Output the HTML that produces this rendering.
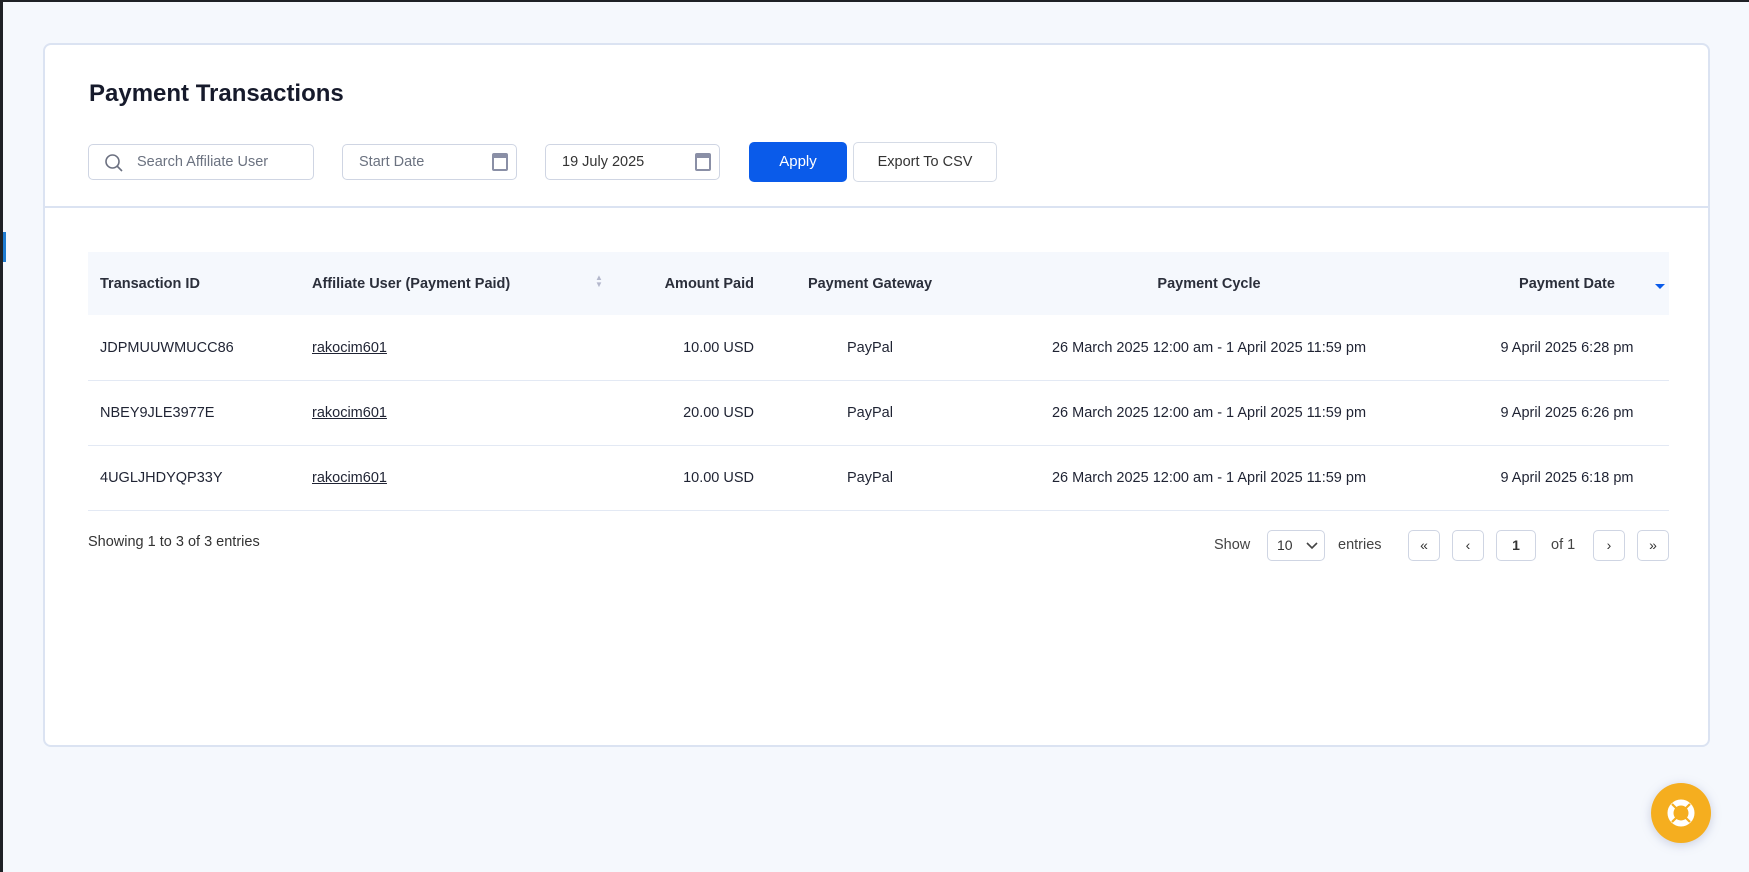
<!DOCTYPE html>
<html><head><meta charset="utf-8"><style>
*{box-sizing:border-box;margin:0;padding:0}
body{width:1749px;height:872px;background:#f5f8fd;font-family:"Liberation Sans",sans-serif;color:#1f2333;position:relative;overflow:hidden;border-top:2px solid #1e2126;border-left:3px solid #1e2126}
.a{position:absolute}
.card{left:40px;top:41px;width:1667px;height:704px;background:#fff;border:2px solid #dbe3f2;border-radius:8px}
.inp{border:1px solid #cfd5e3;border-radius:5px;height:36px;font-size:14.5px;color:#6b7280;line-height:34px}
.th{font-size:14.5px;font-weight:bold;color:#2b2f3b;top:274px}
.td{font-size:14.5px;color:#1f2333}
.ln{height:1px;background:#e3e9f4;left:85px;width:1581px}
.pb{border:1px solid #cfd5e3;border-radius:5px;height:31px;top:528px;text-align:center;line-height:29px;font-size:14px;color:#333}
.cal{width:16px;height:18px;border:2px solid #8a8fa6;border-top-width:5px;border-radius:2px}
</style></head><body>
<div class="a" style="left:0;top:230px;width:3px;height:30px;background:#1e7bd1"></div>
<div class="a card"></div>
<div class="a" style="left:86px;top:78px;font-size:24px;font-weight:bold;color:#161a2b">Payment Transactions</div>
<div class="a inp" style="left:85px;top:142px;width:226px;padding-left:48px">Search Affiliate User</div>
<svg class="a" style="left:101px;top:151px" width="20" height="20" viewBox="0 0 20 20"><circle cx="8.5" cy="8.5" r="6.5" fill="none" stroke="#6b7080" stroke-width="1.6"/><path d="M13 13l5 5" stroke="#6b7080" stroke-width="1.6"/></svg>
<div class="a inp" style="left:339px;top:142px;width:175px;padding-left:16px">Start Date</div>
<div class="a cal" style="left:489px;top:151px"></div>
<div class="a inp" style="left:542px;top:142px;width:175px;padding-left:16px;color:#333">19 July 2025</div>
<div class="a cal" style="left:692px;top:151px"></div>
<div class="a" style="left:746px;top:140px;width:98px;height:40px;background:#0a5bea;border-radius:5px;color:#fff;font-size:15px;text-align:center;line-height:40px">Apply</div>
<div class="a" style="left:850px;top:140px;width:144px;height:40px;border:1px solid #d5dbe6;border-radius:5px;color:#333;font-size:14.5px;text-align:center;line-height:38px">Export To CSV</div>
<div class="a" style="left:42px;top:204px;width:1663px;height:2px;background:#dbe3f2"></div>
<div class="a" style="left:85px;top:250px;width:1581px;height:63px;background:#f5f8fd"></div>
<div class="a th" style="left:97px">Transaction ID</div>
<div class="a th" style="left:309px">Affiliate User (Payment Paid)</div>
<div class="a" style="left:592px;top:272px;font-size:8px;color:#b4b8cc;line-height:7px">▲<br>▼</div>
<div class="a th" style="left:600px;width:151px;text-align:right">Amount Paid</div>
<div class="a th" style="left:767px;width:200px;text-align:center">Payment Gateway</div>
<div class="a th" style="left:1006px;width:400px;text-align:center">Payment Cycle</div>
<div class="a th" style="left:1464px;width:200px;text-align:center">Payment Date</div>
<div class="a" style="left:1652px;top:282px;width:0;height:0;border-left:5px solid transparent;border-right:5px solid transparent;border-top:5px solid #0a5bea"></div>

<div class="a td" style="left:97px;top:338px">JDPMUUWMUCC86</div>
<div class="a td" style="left:309px;top:338px;text-decoration:underline">rakocim601</div>
<div class="a td" style="left:600px;top:338px;width:151px;text-align:right">10.00 USD</div>
<div class="a td" style="left:767px;top:338px;width:200px;text-align:center">PayPal</div>
<div class="a td" style="left:1006px;top:338px;width:400px;text-align:center">26 March 2025 12:00 am - 1 April 2025 11:59 pm</div>
<div class="a td" style="left:1464px;top:338px;width:200px;text-align:center">9 April 2025 6:28 pm</div>
<div class="a ln" style="top:378px"></div>
<div class="a td" style="left:97px;top:403px">NBEY9JLE3977E</div>
<div class="a td" style="left:309px;top:403px;text-decoration:underline">rakocim601</div>
<div class="a td" style="left:600px;top:403px;width:151px;text-align:right">20.00 USD</div>
<div class="a td" style="left:767px;top:403px;width:200px;text-align:center">PayPal</div>
<div class="a td" style="left:1006px;top:403px;width:400px;text-align:center">26 March 2025 12:00 am - 1 April 2025 11:59 pm</div>
<div class="a td" style="left:1464px;top:403px;width:200px;text-align:center">9 April 2025 6:26 pm</div>
<div class="a ln" style="top:443px"></div>
<div class="a td" style="left:97px;top:468px">4UGLJHDYQP33Y</div>
<div class="a td" style="left:309px;top:468px;text-decoration:underline">rakocim601</div>
<div class="a td" style="left:600px;top:468px;width:151px;text-align:right">10.00 USD</div>
<div class="a td" style="left:767px;top:468px;width:200px;text-align:center">PayPal</div>
<div class="a td" style="left:1006px;top:468px;width:400px;text-align:center">26 March 2025 12:00 am - 1 April 2025 11:59 pm</div>
<div class="a td" style="left:1464px;top:468px;width:200px;text-align:center">9 April 2025 6:18 pm</div>
<div class="a ln" style="top:508px"></div>

<div class="a" style="left:85px;top:532px;font-size:14.5px;color:#333">Showing 1 to 3 of 3 entries</div>
<div class="a" style="left:1211px;top:535px;font-size:14.5px;color:#444">Show</div>
<div class="a pb" style="left:1264px;width:58px;text-align:left;padding-left:9px">10</div>
<svg class="a" style="left:1303px;top:540px" width="12" height="8"><path d="M1 1l5 5 5-5" fill="none" stroke="#444" stroke-width="1.6"/></svg>
<div class="a" style="left:1335px;top:535px;font-size:14.5px;color:#444">entries</div>
<div class="a pb" style="left:1405px;width:32px">«</div>
<div class="a pb" style="left:1449px;width:32px">‹</div>
<div class="a pb" style="left:1493px;width:40px;font-weight:bold">1</div>
<div class="a" style="left:1548px;top:535px;font-size:14.5px;color:#444">of 1</div>
<div class="a pb" style="left:1590px;width:32px">›</div>
<div class="a pb" style="left:1634px;width:32px">»</div>

<div class="a" style="left:1648px;top:781px;width:60px;height:60px;border-radius:50%;background:#f5ae1f;box-shadow:0 2px 10px rgba(120,130,170,.35)"></div>
<svg class="a" style="left:1664px;top:797px" width="28" height="28" viewBox="0 0 28 28"><circle cx="14" cy="14" r="10.5" fill="none" stroke="#fff" stroke-width="6"/><g stroke="#f5ae1f" stroke-width="2.2"><path d="M5 5l5 5M23 5l-5 5M5 23l5-5M23 23l-5-5"/></g></svg>
</body></html>
